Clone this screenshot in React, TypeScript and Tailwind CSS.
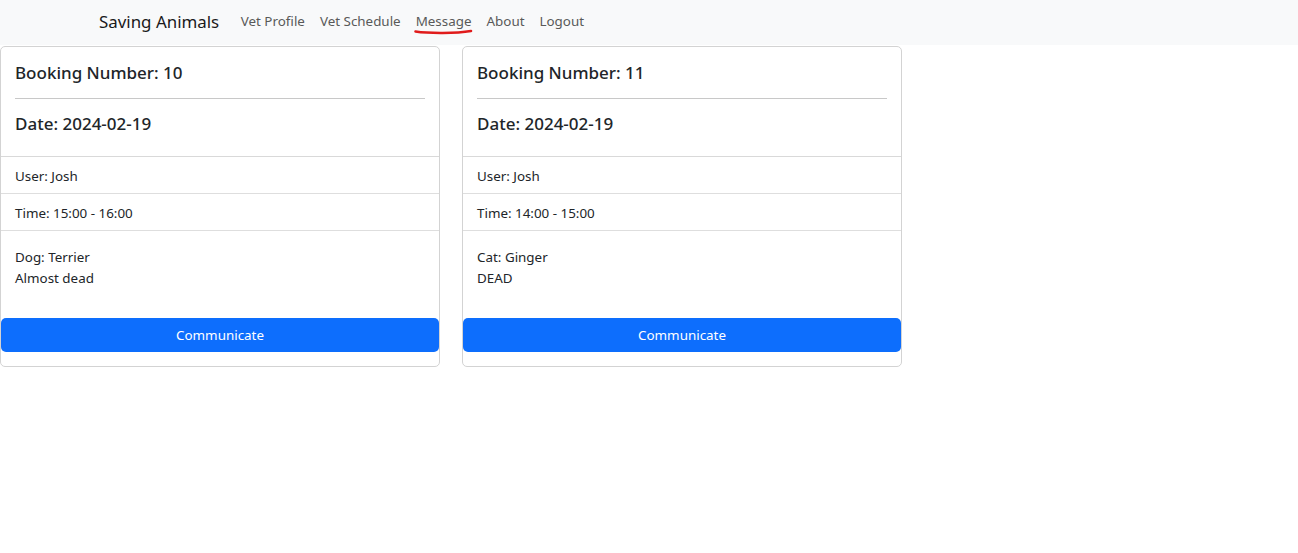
const font = { fontFamily: '"Noto Sans", "Liberation Sans", sans-serif' };

type Booking = { no: number; date: string; user: string; time: string; pet: string; note: string };

const bookings: Booking[] = [
  { no: 10, date: "2024-02-19", user: "Josh", time: "15:00 - 16:00", pet: "Dog: Terrier", note: "Almost dead" },
  { no: 11, date: "2024-02-19", user: "Josh", time: "14:00 - 15:00", pet: "Cat: Ginger", note: "DEAD" },
];

function BookingCard({ b }: { b: Booking }) {
  return (
    <div className="w-[440px] rounded-[5px] border border-[#d3d3d3] bg-white text-[#212529]">
      <div className="border-b border-[#d9d9d9] px-[14px] pt-[15px] pb-[21px]">
        <h5 className="text-[17px] font-medium leading-[22px]">Booking Number: {b.no}</h5>
        <hr className="my-[14px] border-t border-[#c8c8c8]" />
        <h5 className="text-[17px] font-medium leading-[22px]">Date: {b.date}</h5>
      </div>
      <div className="border-b border-[#dedede] px-[14px] pt-[8px] pb-[6px] text-[13.4px] leading-[22px]">User: {b.user}</div>
      <div className="border-b border-[#dedede] px-[14px] pt-[8px] pb-[6px] text-[13.4px] leading-[22px]">Time: {b.time}</div>
      <div className="px-[14px] pt-[16px] pb-[29px] text-[13.4px] leading-[21px]">
        <p>{b.pet}</p>
        <p>{b.note}</p>
      </div>
      <div className="pb-[14px]">
        <button className="h-[34px] w-full rounded-[5px] bg-[#0d6efd] text-[13.4px] text-white">Communicate</button>
      </div>
    </div>
  );
}

export default function App() {
  return (
    <div className="min-h-[553px] bg-white" style={font}>
      <nav className="flex h-[45px] items-center bg-[#f8f9fa] pb-[2px] pl-[99px]">
        <span className="mr-[14px] text-[16.9px] text-[#1a1a1a]">Saving Animals</span>
        <ul className="flex text-[13.4px] text-[#595959]">
          {["Vet Profile", "Vet Schedule", "Message", "About", "Logout"].map((l) => (
            <li key={l} className="relative px-[7.5px]">
              {l}
              {l === "Message" && (
                <svg className="absolute left-[6px] top-[17px]" width="60" height="8" viewBox="0 0 60 8">
                  <path d="M1.5 3.5 C 15 5.5, 42 5.5, 57 3" stroke="#e01b1b" strokeWidth="2.6" fill="none" strokeLinecap="round" />
                </svg>
              )}
            </li>
          ))}
        </ul>
      </nav>
      <div className="mt-px flex gap-[22px]">
        {bookings.map((b) => (
          <BookingCard key={b.no} b={b} />
        ))}
      </div>
    </div>
  );
}
